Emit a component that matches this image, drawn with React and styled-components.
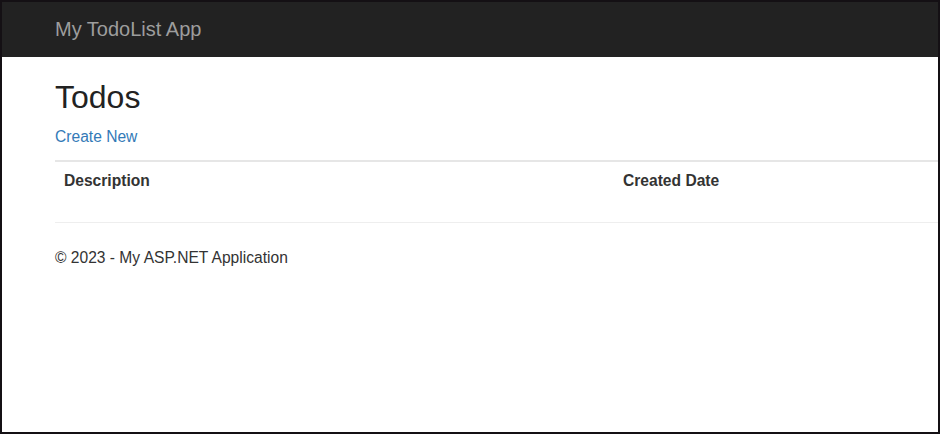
import React from 'react';
import styled, { createGlobalStyle } from 'styled-components';

const GlobalStyle = createGlobalStyle`
  html, body {
    margin: 0;
    padding: 0;
    background: #fff;
  }
  body {
    font-family: "Liberation Sans", Arial, Helvetica, sans-serif;
    font-size: 15.6px;
    line-height: 22px;
    color: #333;
  }
`;

const Frame = styled.div`
  box-sizing: border-box;
  width: 940px;
  height: 434px;
  border: 2px solid #141014;
  overflow: hidden;
  display: flex;
  flex-direction: column;
  background: #fff;
`;

const Navbar = styled.header`
  flex: 0 0 55px;
  background: #222;
  display: flex;
  align-items: center;
  padding-left: 53px;
`;

const Brand = styled.a`
  font-size: 20px;
  color: #9d9d9d;
  text-decoration: none;
  margin-top: -2px;
`;

const Container = styled.main`
  padding: 0 0 0 53px;
`;

const Title = styled.h1`
  margin: 23px 0 0;
  font-size: 32px;
  font-weight: 400;
  line-height: 35px;
  color: #222;
`;

const LinkRow = styled.p`
  margin: 11px 0 12px;
`;

const Link = styled.a`
  color: #337ab7;
  text-decoration: none;
`;

const Table = styled.table`
  width: 1000px;
  border-collapse: collapse;
  border-top: 2px solid #e6e6e6;
`;

const Th = styled.th`
  text-align: left;
  font-weight: 700;
  padding: 8px 9px 9px;
  width: ${({ $w }) => $w || 'auto'};
  color: #333;
`;

const Rule = styled.hr`
  margin: 21px 0 0;
  border: 0;
  border-top: 1px solid #eee;
`;

const Footer = styled.footer`
  margin-top: 24px;
  color: #333;
`;

export default function App() {
  return (
    <>
      <GlobalStyle />
      <Frame>
        <Navbar>
          <Brand href="#">My TodoList App</Brand>
        </Navbar>
        <Container>
          <Title>Todos</Title>
          <LinkRow>
            <Link href="#">Create New</Link>
          </LinkRow>
          <Table>
            <thead>
              <tr>
                <Th $w="541px">Description</Th>
                <Th>Created Date</Th>
              </tr>
            </thead>
          </Table>
          <Rule />
          <Footer>© 2023 - My ASP.NET Application</Footer>
        </Container>
      </Frame>
    </>
  );
}
